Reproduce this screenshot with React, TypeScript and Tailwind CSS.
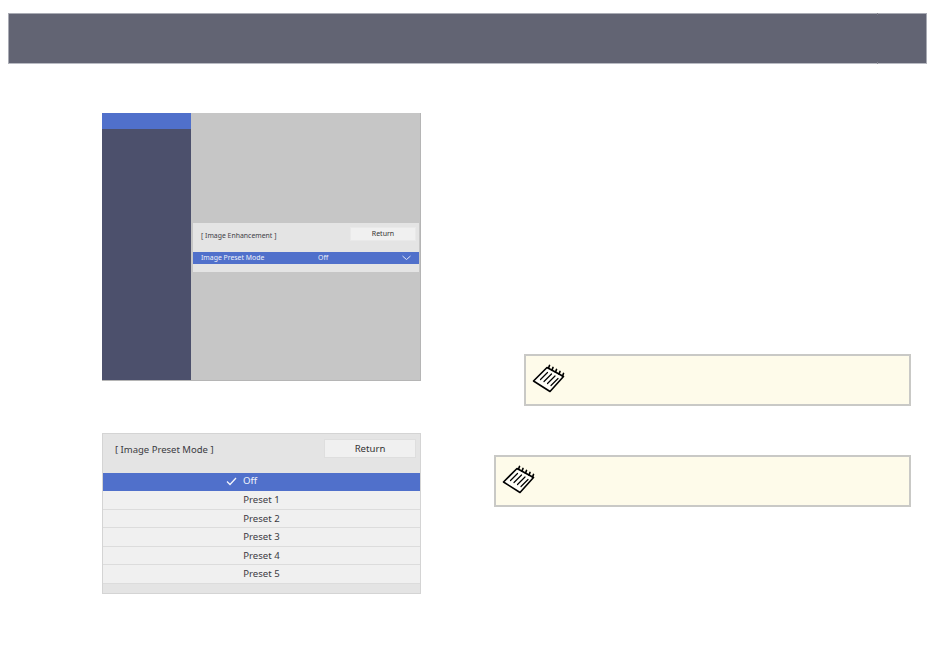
const font = { fontFamily: '"Noto Sans", sans-serif' };

function NoteIcon() {
  return (
    <svg width="34" height="30" viewBox="0 0 34 30" fill="none" stroke="#000" strokeLinecap="round" strokeLinejoin="round">
      <path d="M1.5 17 L15 3.5 L31.5 12.5 L18 27.5 Z" fill="#fffef8" strokeWidth="1.6" />
      <path d="M17.5 1.5 L16.5 4 M21 3.5 L20 6 M24.5 5.5 L23.5 8 M28 7.5 L27 10 M31.5 9.5 L30.5 12" strokeWidth="1.7" />
      <path d="M8.5 15.5 L15.5 8.5 M12 17.5 L19.5 10 M15.5 19.5 L23 12 M19 21.5 L26 14.5" strokeWidth="1.2" />
    </svg>
  );
}

function Note({ className }: { className: string }) {
  return (
    <div className={"h-[52px] bg-[#fefbea] border-2 border-[#c9c9c6] flex items-center pl-[6px] pb-[2px] " + className}>
      <NoteIcon />
    </div>
  );
}

const presets = ["Preset 1", "Preset 2", "Preset 3", "Preset 4", "Preset 5"];

export default function App() {
  return (
    <div className="w-[950px] h-[660px] bg-white overflow-hidden pt-[13px] pl-[8px]" style={font}>
      <div className="relative w-[919px] h-[51px] bg-[#626473] border border-[#a9abb4] border-b-[#b9bbc3]">
        <div className="absolute left-[868px] -top-px w-px h-[2px] bg-[#7c7d88]" />
        <div className="absolute left-[868px] -bottom-px w-px h-[2px] bg-[#85868f]" />
      </div>
      <div className="flex mt-[49px] ml-[94px]">
        <div className="w-[319px] flex flex-col">
          <div className="h-[268px] flex bg-[#c6c6c6] border-r border-b border-[#b5b5b5]">
            <div className="w-[89px] bg-[#4c506c] flex flex-col">
              <div className="h-[16px] bg-[#5070cb]" />
            </div>
            <div className="flex-1 pt-[110px] pl-[2px] pr-[1px]">
              <div className="h-[49px] bg-[#e4e4e4] flex flex-col pt-[4px]">
                <div className="h-[21px] flex items-start justify-between pl-[8px] pr-[3px]">
                  <span className="text-[6.9px] leading-[16px] text-[#3c3c44] mt-[1px]">[ Image Enhancement ]</span>
                  <div className="w-[66px] h-[14px] bg-[#f0f0f0] border border-[#e9e9e9] text-[7px] leading-[11px] text-[#333] text-center">Return</div>
                </div>
                <div className="h-[12px] mt-[4px] bg-[#5070cb] flex items-center text-[6.9px] text-[#eef0fa] pl-[8px] relative">
                  <span className="w-[117px]">Image Preset Mode</span>
                  <span>Off</span>
                  <svg className="absolute right-[8px] top-[3px]" width="9" height="6" viewBox="0 0 9 6" fill="none" stroke="#dfe4f6" strokeWidth="1">
                    <path d="M0.5 1 L4.5 4.5 L8.5 1" />
                  </svg>
                </div>
              </div>
            </div>
          </div>
          <div className="mt-[52px] h-[161px] bg-[#e4e4e4] border border-[#d4d4d4] flex flex-col">
            <div className="h-[38px] flex items-start justify-between pl-[12px] pr-[4px] pt-[5px]">
              <span className="text-[9.5px] leading-[22px] text-[#3b3b42]">[ Image Preset Mode ]</span>
              <div className="w-[92px] h-[19px] bg-[#f0f0f0] border border-[#dedede] text-[9.6px] leading-[18px] text-[#333] text-center">Return</div>
            </div>
            <div className="h-[18px] mt-px bg-[#5070cb] text-[#f2f4fc] text-[9.6px] leading-[15px] flex pl-[123px] gap-[6px]">
              <svg className="mt-[4px]" width="11" height="9" viewBox="0 0 11 9" fill="none" stroke="#f2f4fc" strokeWidth="1.3">
                <path d="M1 4.5 L4 7.5 L10 1" />
              </svg>
              <span>Off</span>
            </div>
            {presets.map((p) => (
              <div key={p} className="h-[18.5px] bg-[#f0f0f0] border-b border-[#dcdcdc] text-[9.6px] leading-[17px] text-[#3b3b42] text-center">
                {p}
              </div>
            ))}
          </div>
        </div>
        <div className="ml-[73px] w-[417px] pt-[241px] flex flex-col">
          <Note className="ml-[30px]" />
          <Note className="mt-[49px]" />
        </div>
      </div>
    </div>
  );
}
